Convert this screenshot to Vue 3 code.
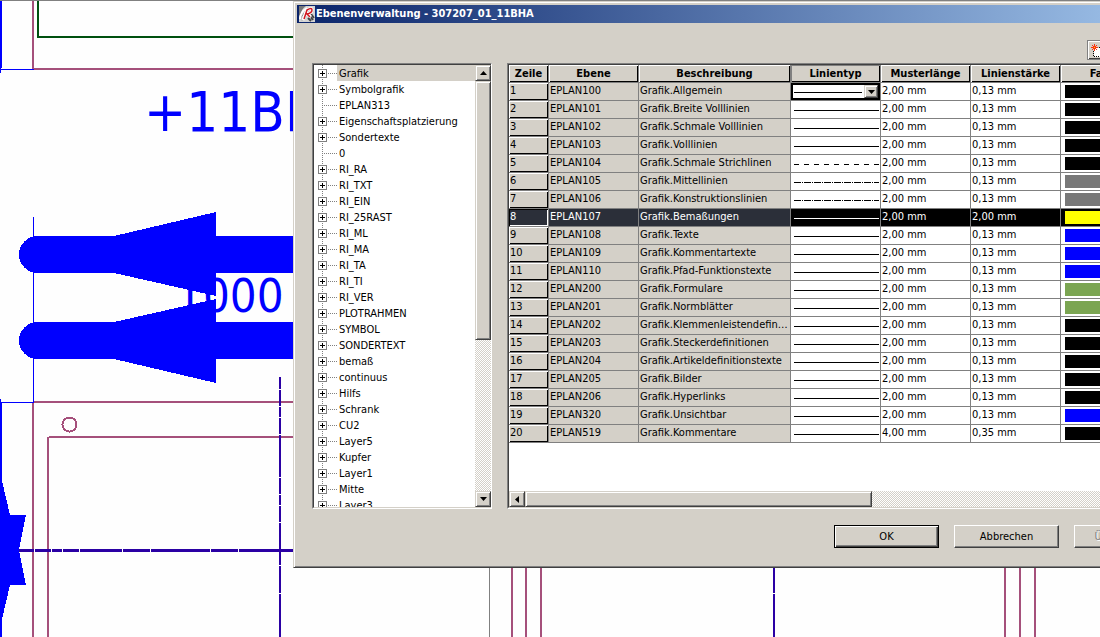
<script setup>
import { ref } from 'vue'

const layers = [
  ['Grafik', 1], ['Symbolgrafik', 1], ['EPLAN313', 0], ['Eigenschaftsplatzierung', 1], ['Sondertexte', 1],
  ['0', 0], ['RI_RA', 1], ['RI_TXT', 1], ['RI_EIN', 1], ['RI_25RAST', 1], ['RI_ML', 1], ['RI_MA', 1],
  ['RI_TA', 1], ['RI_TI', 1], ['RI_VER', 1], ['PLOTRAHMEN', 1], ['SYMBOL', 1], ['SONDERTEXT', 1],
  ['bemaß', 1], ['continuus', 1], ['Hilfs', 1], ['Schrank', 1], ['CU2', 1], ['Layer5', 1], ['Kupfer', 1],
  ['Layer1', 1], ['Mitte', 1], ['Layer3', 1]
]
const headers = ['Zeile', 'Ebene', 'Beschreibung', 'Linientyp', 'Musterlänge', 'Linienstärke', 'Farbe']

const row = (id, text, color = 'black', line = 'solid', length = '2,00 mm', width = '0,13 mm') =>
  ({ id: 'EPLAN' + id, text: 'Grafik.' + text, color, line, length, width })
const rows = [
  row(100, 'Allgemein'),
  row(101, 'Breite Volllinien'),
  row(102, 'Schmale Volllinien'),
  row(103, 'Volllinien'),
  row(104, 'Schmale Strichlinen', 'black', 'dash'),
  row(105, 'Mittellinien', 'gray', 'dashdot'),
  row(106, 'Konstruktionslinien', 'gray', 'dashdot'),
  row(107, 'Bemaßungen', 'yellow', 'solid', '2,00 mm', '2,00 mm'),
  row(108, 'Texte', 'blue'),
  row(109, 'Kommentartexte', 'blue'),
  row(110, 'Pfad-Funktionstexte', 'blue'),
  row(200, 'Formulare', 'green'),
  row(201, 'Normblätter', 'green'),
  row(202, 'Klemmenleistendefinitionen'),
  row(203, 'Steckerdefinitionen'),
  row(204, 'Artikeldefinitionstexte'),
  row(205, 'Bilder'),
  row(206, 'Hyperlinks'),
  row(320, 'Unsichtbar', 'blue'),
  row(519, 'Kommentare', 'black', 'solid', '4,00 mm', '0,35 mm')
]
const dashes = { solid: 'none', dash: '5 5', dashdot: '7 1 1 1' }
const selected = ref(7)
const lineType = ref('solid')

const vGaps = [389, 406, 417, 434, 477, 494, 505, 522, 565, 593]
const hGaps = [34, 51, 62, 79, 122, 150, 210, 238]
</script>

<template>
  <main class="desktop">
    <svg class="drawing" aria-hidden="true" shape-rendering="crispEdges">
      <rect width="100%" height="1" fill="#808080" />
      <g fill="#a5507b">
        <rect x="32" y="1" width="2" height="69" />
        <rect x="33" y="68" width="270" height="2" />
        <rect x="34" y="401" width="270" height="2" />
        <rect x="32" y="403" width="2" height="300" />
        <rect x="49" y="436" width="260" height="2" />
        <rect x="47" y="437" width="2" height="300" />
        <rect v-for="x in [511, 525, 540, 1004, 1019, 1034]" :key="x" :x="x" y="560" width="2" height="200" />
      </g>
      <circle cx="69.5" cy="424.5" r="7" fill="none" stroke="#a5507b" stroke-width="2" />
      <path d="M37 1h2v35h265v2H37z" fill="#00500f" />
      <rect x="489" y="560" width="1" height="200" fill="#808080" />
      <g fill="#2a00a4">
        <rect x="279" y="377" width="2" height="300" />
        <rect x="773" y="560" width="2" height="200" />
        <rect x="19" y="549" width="290" height="3" />
      </g>
      <g fill="#fff">
        <rect v-for="y in vGaps" :key="y" x="279" :y="y" width="2" height="1" />
        <rect v-for="x in hGaps" :key="x" :x="x" y="549" width="1" height="3" />
        <rect x="773" y="593" width="2" height="1" />
      </g>
      <g fill="#00f">
        <path d="M0 1h2v67H1v1h33v1H1v3H0z" />
        <rect x="33" y="217" width="1" height="186" />
        <path d="M0 399h1v3h33v1H2v78l8 34h16l-7 35 7 35H10l-8 34v30H0z" />
        <path d="M37.500 236H114L216 212V236H310V273H216V296L114 273H37.500a18.500 18.500 0 0 1 0-37z" />
        <path d="M37.500 322H114L216 299V322H310V359H216V383L114 359H37.500a18.500 18.500 0 0 1 0-37z" />
      </g>
      <text class="mark" x="144" y="131">+11BHA</text>
      <text class="size" x="176" y="312">1000</text>
    </svg>

    <section class="dialog" aria-labelledby="title">
      <header class="titlebar">
        <svg width="16" height="16" viewBox="0 0 16 16" aria-hidden="true">
          <rect width="16" height="16" fill="#d4d4d4" />
          <path d="M0 0H7Q2 3 2 9L0 12z" fill="#777" />
          <path d="M1 13Q1 6 8 2M3 15Q3 9 6 7" fill="none" stroke="#fff" stroke-width="2" />
          <path d="M3 15Q2 10 5 7" fill="none" stroke="#888" />
          <path d="M10 9l4 5M9 12l3 3M12 8l3 4" fill="none" stroke="#444" stroke-width="2" />
          <path d="M4 14L8 4Q13 1 13 4T8 8L12 11" fill="none" stroke="#fff" stroke-width="3" />
          <path d="M5 13L8 4Q13 1 13 4T8 8L11 11" fill="none" stroke="#d01820" stroke-width="1.5" />
        </svg>
        <h1 id="title">Ebenenverwaltung - 307207_01_11BHA</h1>
      </header>

      <div class="toolbar">
        <button class="tool" type="button" aria-label="Neu">
          <svg width="16" height="16" viewBox="0 0 16 16" aria-hidden="true">
            <path d="M4 5h11v9H4z" fill="#fff" />
            <path d="M7 4.500H15M3.500 8V14M4 13.500H15" stroke="#000" stroke-dasharray="1 1" />
            <path d="M4.500 1V8M1 4.500H8M2 2l5 5M7 2L2 7" stroke="#ff3010" />
            <rect x="4" y="4" width="1" height="1" fill="#ffe000" />
          </svg>
        </button>
      </div>

      <div class="panes">
        <div class="pane tree-pane">
          <ul class="tree">
            <li v-for="([name, open], i) in layers" :key="name" :class="{ current: i === 0 }">
              <span class="branch">
                <button v-if="open" class="plus" type="button" :aria-label="name + ' öffnen'"></button>
              </span>
              <span class="name">{{ name }}</span>
            </li>
          </ul>
          <div class="vscroll">
            <button class="arrow" type="button" aria-label="Nach oben">
              <svg width="7" height="4" aria-hidden="true"><path d="M0 4L3.500 0 7 4z" /></svg>
            </button>
            <div class="thumb"></div>
            <div class="space"></div>
            <button class="arrow" type="button" aria-label="Nach unten">
              <svg width="7" height="4" aria-hidden="true"><path d="M0 0L3.500 4 7 0z" /></svg>
            </button>
          </div>
        </div>

        <div class="pane grid-pane">
          <div class="grid-area">
            <table>
              <colgroup>
                <col class="c-num"><col class="c-std"><col class="c-text"><col class="c-std"><col class="c-std"><col class="c-std"><col class="c-std"><col>
              </colgroup>
              <thead>
                <tr>
                  <th v-for="h in headers" :key="h" scope="col" :class="{ pressed: h === 'Linientyp' }">{{ h }}</th>
                  <td class="blank"></td>
                </tr>
              </thead>
              <tbody>
                <tr v-for="(r, i) in rows" :key="r.id" :class="{ selected: i === selected }" @click="selected = i">
                  <th scope="row">{{ i + 1 }}</th>
                  <td class="fixed">{{ r.id }}</td>
                  <td class="fixed">{{ r.text }}</td>
                  <td :class="i === 0 ? 'editing' : 'line'">
                    <svg class="stroke" height="1" aria-hidden="true">
                      <line x1="0" y1="0.500" x2="100%" y2="0.500" stroke="currentColor" :stroke-dasharray="dashes[r.line]" />
                    </svg>
                    <template v-if="i === 0">
                      <select v-model="lineType" aria-label="Linientyp">
                        <option value="solid"></option>
                      </select>
                      <span class="drop"><svg width="7" height="4" aria-hidden="true"><path d="M0 0L3.500 4 7 0z" /></svg></span>
                    </template>
                  </td>
                  <td>{{ r.length }}</td>
                  <td>{{ r.width }}</td>
                  <td class="color"><span :class="['swatch', r.color]"></span></td>
                  <td></td>
                </tr>
              </tbody>
            </table>
          </div>
          <div class="hscroll">
            <button class="arrow" type="button" aria-label="Nach links">
              <svg width="4" height="7" aria-hidden="true"><path d="M4 0L0 3.500 4 7z" /></svg>
            </button>
            <div class="thumb"></div>
            <div class="space"></div>
          </div>
        </div>
      </div>

      <footer class="actions">
        <button class="action default" type="button">OK</button>
        <button class="action" type="button">Abbrechen</button>
        <button class="action" type="button" disabled>Übernehmen</button>
      </footer>
    </section>
  </main>
</template>

<style>
body { background: #fefefe; }
</style>

<style scoped>
* { box-sizing: border-box; }
.desktop {
  position: relative;
  min-height: 100vh;
  padding-top: 1px;
  overflow: hidden;
  color: #000;
  font: 11px/16px "DejaVu Sans Condensed", "Noto Sans", sans-serif;
}
.drawing { position: absolute; top: 0; left: 0; width: 100%; height: 100%; }
.drawing text { fill: #00f; }
.mark { font-size: 56px; }
.size { font-size: 47px; }

.dialog {
  position: relative;
  margin: 0 -98px 0 293px;
  padding: 2px;
  background: #d4d0c8;
  border: 1px solid;
  border-color: #d4d0c8 #404040 #404040 #d4d0c8;
  box-shadow: inset 1px 1px #fff, inset -1px -1px #808080;
}
.titlebar {
  display: flex;
  align-items: center;
  gap: 1px;
  height: 18px;
  margin: 1px;
  padding-left: 2px;
  background: linear-gradient(90deg, #0a246a, #a6caf0);
}
h1 { margin: 0; color: #fff; font-size: 11px; line-height: 16px; font-weight: bold; white-space: nowrap; }
button { padding: 0; border: 0; background: #d4d0c8; color: #000; font: inherit; }
.toolbar { display: flex; justify-content: flex-end; height: 39px; padding: 16px 86px 0 0; }
.tool {
  width: 22px;
  height: 20px;
  border: 1px solid #808080;
  box-shadow: inset 1px 1px #fff, inset -1px -1px #404040;
}
.tool svg { display: block; margin: 2px; }

.panes { display: flex; gap: 15px; height: 446px; padding: 0 16px; }
.pane {
  border: 1px solid;
  border-color: #808080 #fff #fff #808080;
  background: #fff;
  overflow: hidden;
}
.tree-pane { display: flex; flex: none; width: 180px; }
.tree {
  flex: 1;
  margin: 0;
  padding: 0;
  list-style: none;
  overflow: hidden;
  border: solid;
  border-width: 1px 0 1px 1px;
  border-color: #404040 #404040 #d4d0c8 #404040;
}
.tree li { display: flex; height: 16px; }
.branch {
  flex: none;
  width: 23px;
  background:
    repeating-linear-gradient(90deg, #808080 0 1px, transparent 1px 2px) 8px 8px / 15px 1px no-repeat,
    repeating-linear-gradient(#808080 0 1px, transparent 1px 2px) 8px 0 / 1px 16px no-repeat;
}
.plus {
  display: block;
  width: 9px;
  height: 9px;
  margin: 4px;
  border: 1px solid #808080;
  background:
    linear-gradient(#000, #000) 1px 3px / 5px 1px no-repeat,
    linear-gradient(#000, #000) 3px 1px / 1px 5px no-repeat,
    #fff;
}
.name { flex: 1; padding: 1px 0 0 2px; line-height: 15px; white-space: nowrap; }
.current .name { background: #d4d0c8; }
.vscroll {
  display: flex;
  flex: none;
  flex-direction: column;
  width: 16px;
  border: solid;
  border-width: 1px 0;
  border-color: #404040 #d4d0c8 #d4d0c8;
}
.arrow {
  display: flex;
  flex: none;
  align-items: center;
  justify-content: center;
  width: 16px;
  height: 16px;
}
.arrow, .thumb, .drop {
  background: #d4d0c8;
  border: 1px solid;
  border-color: #d4d0c8 #404040 #404040 #d4d0c8;
  box-shadow: inset 1px 1px #fff, inset -1px -1px #808080;
}
.vscroll .thumb { height: 259px; }
.space { flex: 1; background: repeating-conic-gradient(#fff 0 25%, #d4d0c8 0 50%) 0 0 / 2px 2px; }

.grid-pane { display: flex; flex: 1; flex-direction: column; min-width: 0; }
.grid-area { flex: 1; overflow: hidden; border: solid #404040; border-width: 1px 0 0 1px; }
table { width: 100%; table-layout: fixed; border-collapse: separate; border-spacing: 0; }
.c-num { width: 40px; }
.c-std { width: 90px; }
.c-text { width: 152px; }
th, td {
  height: 18px;
  padding: 0 1px;
  border: solid #808080;
  border-width: 0 1px 1px 0;
  line-height: 15px;
  text-align: left;
  vertical-align: top;
  white-space: nowrap;
  overflow: hidden;
  text-overflow: ellipsis;
}
th { background: #d4d0c8; box-shadow: inset 1px 1px #fff, inset -1px -1px #000; font-weight: normal; }
thead th { font-weight: bold; text-align: center; line-height: 17px; }
thead .pressed { padding-top: 1px; box-shadow: inset 1px 1px #808080, inset -1px -1px #000; line-height: 16px; }
.blank, .fixed { background: #d4d0c8; }
.line { padding: 9px 1px 0 3px; }
.stroke { display: block; width: 100%; }
.editing {
  position: relative;
  padding: 9px 18px 0 3px;
  box-shadow: inset 0 0 0 2px #000;
}
select {
  position: absolute;
  inset: 2px;
  width: 85px;
  height: 13px;
  border: 0;
  background: transparent;
  appearance: none;
}
.drop {
  position: absolute;
  top: 2px;
  right: 2px;
  display: flex;
  align-items: center;
  justify-content: center;
  width: 14px;
  height: 13px;
  pointer-events: none;
}
.color { padding: 2px 0 0 4px; }
.swatch { display: block; width: 82px; height: 13px; }
.black { background: #000; }
.gray { background: #787878; }
.yellow { background: #ff0; }
.blue { background: #00f; }
.green { background: #7ba552; }
.selected th, .selected td { background: #000; color: #fff; }
.selected th, .selected .fixed { background: #2b2f39; }
.selected th { box-shadow: inset 1px 1px #000, inset -1px -1px #fff; }
.hscroll {
  display: flex;
  height: 17px;
  border: solid;
  border-width: 0 0 1px 1px;
  border-color: #d4d0c8 #d4d0c8 #d4d0c8 #404040;
}
.hscroll .thumb { width: 347px; }

.actions { display: flex; justify-content: flex-end; gap: 15px; padding: 16px 16px 17px; }
.action {
  width: 105px;
  height: 23px;
  border: 1px solid;
  border-color: #fff #404040 #404040 #fff;
  box-shadow: inset -1px -1px #808080;
}
.default { border-color: #000; box-shadow: inset 1px 1px #fff, inset -1px -1px #404040, inset -2px -2px #808080; }
.action:disabled { color: #808080; text-shadow: 1px 1px #fff; }
</style>
